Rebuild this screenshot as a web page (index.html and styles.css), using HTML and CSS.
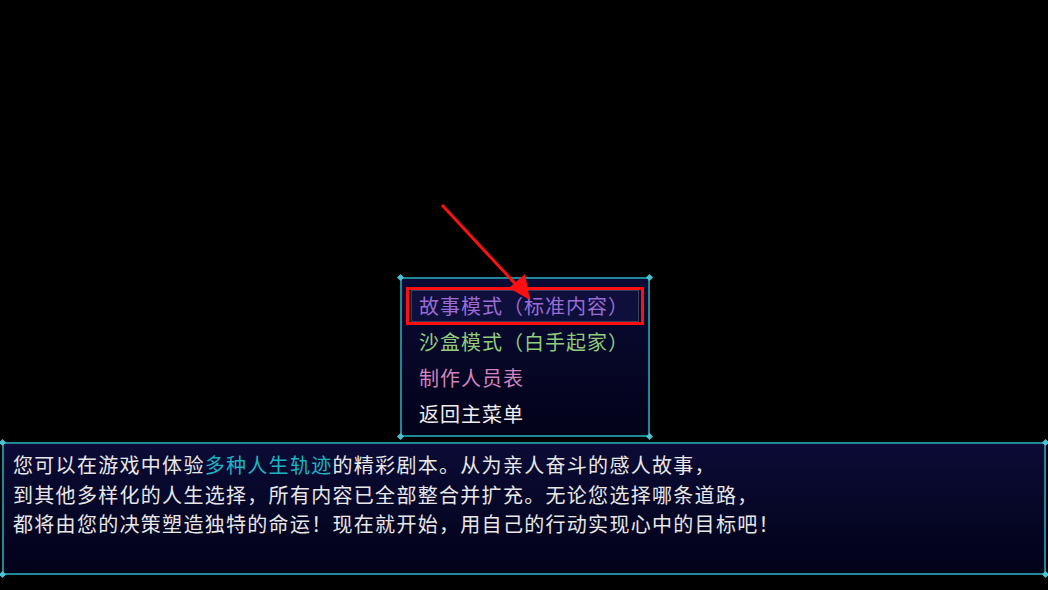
FILE: index.html
```html
<!DOCTYPE html>
<html lang="zh-CN">
<head>
	<meta charset="utf-8">
	<title>新游戏</title>
	<link rel="stylesheet" href="styles.css">
</head>
<body>
<div class="stage">

	<!-- mode select window -->
	<div class="win menu">
		<span class="gem tl"></span><span class="gem tr"></span>
		<span class="gem bl"></span><span class="gem br"></span>
		<div class="item story selected">
			故事模式（标准内容）
			<span class="mark"></span>
		</div>
		<div class="item sandbox">沙盒模式（白手起家）</div>
		<div class="item credits">制作人员表</div>
		<div class="item back">返回主菜单</div>
	</div>

	<!-- help text window -->
	<div class="win help">
		<span class="gem tl"></span><span class="gem tr"></span>
		<span class="gem bl"></span><span class="gem br"></span>
		<p>您可以在游戏中体验<span class="hl">多种人生轨迹</span>的精彩剧本。从为亲人奋斗的感人故事，</p>
		<p>到其他多样化的人生选择，所有内容已全部整合并扩充。无论您选择哪条道路，</p>
		<p>都将由您的决策塑造独特的命运！现在就开始，用自己的行动实现心中的目标吧！</p>
	</div>

	<svg class="arrow" width="100" height="100" viewBox="0 0 100 100">
		<line x1="3" y1="3" x2="82" y2="88" stroke="#ff1010" stroke-width="3"/>
		<polygon points="91,98 70,86 86,72" fill="#ff1010"/>
	</svg>
</div>
</body>
</html>
```

FILE: styles.css
```css
html, body {
	margin: 0;
	background: #000;
}

.stage {
	position: relative;
	width: 1048px;
	height: 590px;
	display: flex;
	flex-direction: column;
	justify-content: flex-end;
	align-items: center;
	padding-bottom: 15px;
	box-sizing: border-box;
	font-family: "Noto Sans CJK SC", "DejaVu Sans", sans-serif;
	font-size: 20px;
	color: #e8e8e8;
}

/* window frame: teal line, small gems at the corners */
.win {
	position: relative;
	box-sizing: border-box;
	border: 2px solid #1f8896;
	background: linear-gradient(#0b0b36, #020219);
}

.gem {
	position: absolute;
	width: 5px;
	height: 5px;
	background: #49c3d3;
	transform: rotate(45deg);
}
.gem.tl { left: -4px; top: -4px; }
.gem.tr { right: -4px; top: -4px; }
.gem.bl { left: -4px; bottom: -4px; }
.gem.br { right: -4px; bottom: -4px; }

.menu {
	width: 250px;
	height: 160px;
	margin-left: 2px;
	margin-bottom: 5px;
	padding: 11px 9px 0 9px;
	letter-spacing: 1px;
}

.item {
	position: relative;
	height: 30px;
	line-height: 30px;
	padding-left: 7px;
	margin-bottom: 4px;
	border: 1px solid transparent;
}

.item.selected {
	border-color: #35405e;
	background: #0f0f3c;
}

.story { color: #9a6cd6; }
.sandbox { color: #8fcc7c; }
.credits { color: #d184bd; }
.back { color: #eeeeee; }

/* red callout box over the chosen entry */
.mark {
	position: absolute;
	left: -6px;
	top: -4px;
	right: -6px;
	bottom: -4px;
	border: 3px solid #ff1010;
}

.help {
	width: 1044px;
	height: 133px;
	padding: 6px 9px;
	letter-spacing: 1.3px;
}

.help p {
	margin: 0;
	line-height: 29.7px;
	white-space: nowrap;
}

.hl { color: #1fb3c2; }

.arrow {
	position: absolute;
	left: 439px;
	top: 202px;
}
```
